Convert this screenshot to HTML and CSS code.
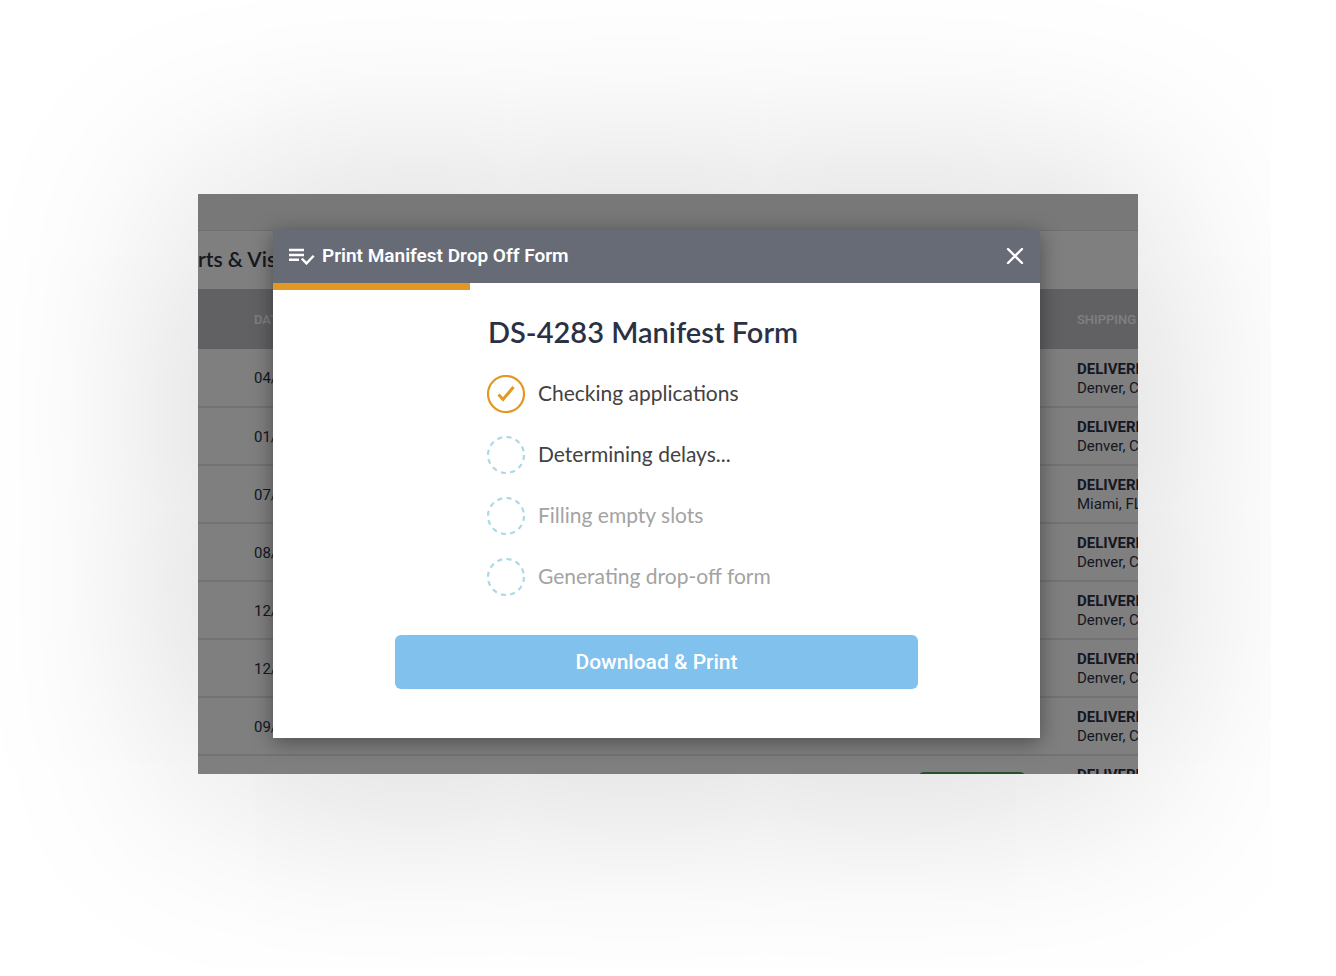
FILE: index.html
```html
<!DOCTYPE html>
<html lang="en">
	<head>
		<meta charset="UTF-8">
		<meta name="viewport" content="width=device-width, initial-scale=1.0">
		<title>Print Manifest Drop Off Form</title>
		<link rel="stylesheet" href="styles.css">
	</head>
	<body>
		<main class="stage">
			<!--page behind the dialog-->
			<div class="page">
				<div class="page-bar"></div>
				<h1 class="page-title">rts &amp; Visits</h1>
				<table class="orders">
					<thead>
						<tr><th class="col-date">DATE</th><th class="col-status"></th><th class="col-shipping">SHIPPING</th></tr>
					</thead>
					<tbody>
						<tr><td>04/12</td><td></td><td><strong>DELIVERED</strong><br>Denver, CO</td></tr>
						<tr><td>01/12</td><td></td><td><strong>DELIVERED</strong><br>Denver, CO</td></tr>
						<tr><td>07/12</td><td></td><td><strong>DELIVERED</strong><br>Miami, FL</td></tr>
						<tr><td>08/12</td><td></td><td><strong>DELIVERED</strong><br>Denver, CO</td></tr>
						<tr><td>12/12</td><td></td><td><strong>DELIVERED</strong><br>Denver, CO</td></tr>
						<tr><td>12/12</td><td></td><td><strong>DELIVERED</strong><br>Denver, CO</td></tr>
						<tr><td>09/12</td><td></td><td><strong>DELIVERED</strong><br>Denver, CO</td></tr>
						<tr><td></td><td><span class="badge"></span></td><td><strong>DELIVERED</strong><br>Denver, CO</td></tr>
					</tbody>
				</table>
			</div>
			<div class="overlay"></div>

			<!--dialog-->
			<section class="dialog" role="dialog" aria-labelledby="dialog-title">
				<header class="dialog-header">
					<svg class="icon-list" viewBox="0 0 26 18" aria-hidden="true">
						<path d="M0 3h15M0 8h15M0 12.8h10"/>
						<path d="M12.8 11.7l4.7 4.7 7.2-7.7"/>
					</svg>
					<h2 class="dialog-title" id="dialog-title">Print Manifest Drop Off Form</h2>
					<button class="close" type="button" aria-label="Close">
						<svg viewBox="0 0 18 18" aria-hidden="true"><path d="M2 2l14 14M16 2L2 16"/></svg>
					</button>
				</header>
				<progress class="progress" value="197" max="767" aria-label="Form progress"></progress>
				<div class="dialog-body">
					<h3 class="form-name">DS-4283 Manifest Form</h3>
					<ul class="steps">
						<li class="step">
							<svg class="step-icon done" viewBox="0 0 38 38" aria-hidden="true">
								<circle cx="19" cy="19" r="18"/>
								<path d="M11.5 19.5l4.5 5 10.5-12.5"/>
							</svg>
							<span class="step-label">Checking applications</span>
						</li>
						<li class="step">
							<svg class="step-icon" viewBox="0 0 38 38" aria-hidden="true"><circle cx="19" cy="19" r="18"/></svg>
							<span class="step-label">Determining delays...</span>
						</li>
						<li class="step waiting">
							<svg class="step-icon" viewBox="0 0 38 38" aria-hidden="true"><circle cx="19" cy="19" r="18"/></svg>
							<span class="step-label">Filling empty slots</span>
						</li>
						<li class="step waiting">
							<svg class="step-icon" viewBox="0 0 38 38" aria-hidden="true"><circle cx="19" cy="19" r="18"/></svg>
							<span class="step-label">Generating drop-off form</span>
						</li>
					</ul>
					<button class="download" type="button">Download &amp; Print</button>
				</div>
			</section>
		</main>
	</body>
</html>
```
FILE: styles.css
```css
*{
	box-sizing:border-box;
	margin:0;
	padding:0;
}
body{
	padding:194px 24px;
	background:#fff;
	color:#2b3145;
	font-family:Roboto,sans-serif;
	overflow-x:hidden;
}
.stage{
	position:relative;
	max-width:940px;
	margin:0 auto;
	padding:36px 98px 36px 75px;
	box-shadow:0 4px 210px rgba(0,0,0,.21);
}

/* page behind the dialog */
.page,
.overlay{
	position:absolute;
	top:0;
	right:0;
	bottom:0;
	left:0;
	overflow:hidden;
}
.page{
	background:#fff;
}
.overlay{
	background:rgba(0,0,0,.5);
}
.page-bar{
	height:37px;
	background:#f0f0f0;
	border-bottom:1px solid #dedede;
}
.page-title{
	height:58px;
	font:600 21px/56px Lato,sans-serif;
	white-space:nowrap;
}
.orders{
	width:1040px;
	table-layout:fixed;
	border-collapse:collapse;
	font-size:15px;
	line-height:19px;
	text-align:left;
}
.orders th{
	height:60px;
	background:#c2c2c6;
	color:#fff;
	font-size:13px;
	font-weight:500;
}
.orders td{
	height:58px;
	padding-top:2px;
	border-bottom:2px solid #e6e6e6;
}
.orders th:first-child,
.orders td:first-child{
	padding-left:56px;
}
.col-date{
	width:720px;
}
.col-status{
	width:159px;
}
.badge{
	display:block;
	width:108px;
	height:27px;
	border-radius:6px;
	background:#4fa35a;
}

/* dialog */
.dialog{
	position:relative;
	background:#fff;
	box-shadow:0 4px 20px rgba(0,0,0,.4);
}
.dialog-header{
	display:flex;
	align-items:center;
	height:53px;
	padding:0 16px 2px;
	background:#676b76;
	color:#fff;
}
.dialog-header svg{
	fill:none;
	stroke:#fff;
	stroke-width:2.4;
}
.icon-list{
	width:26px;
	height:18px;
}
.dialog-title{
	flex:1;
	margin-left:7px;
	font-size:19px;
	font-weight:600;
	line-height:24px;
}
.close{
	width:18px;
	height:18px;
	border:0;
	background:none;
	cursor:pointer;
}
.close svg{
	display:block;
	stroke-linecap:round;
}
.progress{
	display:block;
	width:100%;
	height:7px;
	border:0;
	background:#fff;
	-webkit-appearance:none;
	appearance:none;
}
.progress::-webkit-progress-bar{
	background:#fff;
}
.progress::-webkit-progress-value{
	background:#e39824;
}
.dialog-body{
	padding:24px 122px 49px;
}
.form-name{
	margin-left:93px;
	font:600 29px/36px Lato,sans-serif;
}
.steps{
	display:grid;
	gap:23px;
	margin:25px 0 39px 92px;
	list-style:none;
}
.step{
	display:flex;
	align-items:center;
	gap:13px;
	height:38px;
	color:#424242;
	font:400 21px/28px Lato,sans-serif;
}
.step-label{
	padding-bottom:2px;
}
.waiting{
	color:#a3a3a3;
}
.step-icon{
	width:38px;
	height:38px;
	fill:none;
	stroke:#add8e6;
	stroke-width:2.2;
	stroke-dasharray:5 4.42;
}
.done{
	stroke:#e39824;
	stroke-dasharray:none;
}
.done path{
	stroke-width:3;
}
.download{
	display:block;
	width:100%;
	height:54px;
	border:0;
	border-radius:6px;
	background:#80c1ee;
	color:#fff;
	font:500 21px/26px Roboto,sans-serif;
	cursor:pointer;
}
```
